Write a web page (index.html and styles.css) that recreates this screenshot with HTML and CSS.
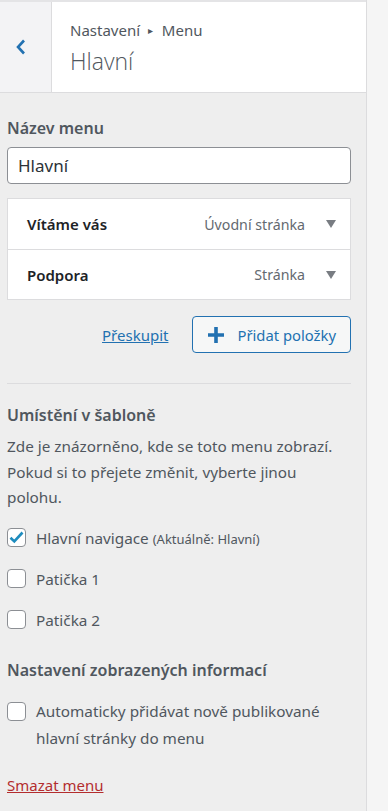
FILE: index.html
```html
<!DOCTYPE html>
<html lang="cs">
<head>
  <meta charset="UTF-8" />
  <meta name="viewport" content="width=device-width, initial-scale=1.0"/>
  <title>Menu – Hlavní</title>
  <link rel="stylesheet" href="styles.css">
</head>
<body>
  <div class="sidebar">
    <div class="panel-head">
      <button class="back" aria-label="Zpět">
        <svg width="10" height="16" viewBox="0 0 10 16"><path d="M8 1.5 L2 8 L8 14.5" fill="none" stroke="#2271b1" stroke-width="2.6"/></svg>
      </button>
      <div class="head-titles">
        <div class="crumb">Nastavení <span class="sep">&#9656;</span> Menu</div>
        <div class="title">Hlavní</div>
      </div>
    </div>

    <div class="content">
      <label class="ctl-title" for="menuName">Název menu</label>
      <input type="text" id="menuName" class="name-input" value="Hlavní" />

      <ul class="menu-items">
        <li>
          <span class="item-title">Vítáme vás</span>
          <span class="item-type">Úvodní stránka</span>
          <span class="arrow"></span>
        </li>
        <li>
          <span class="item-title">Podpora</span>
          <span class="item-type">Stránka</span>
          <span class="arrow"></span>
        </li>
      </ul>

      <div class="actions">
        <a class="reorder">Přeskupit</a>
        <button class="add-items">
          <svg width="16" height="16" viewBox="0 0 16 16"><path d="M6.2 0h3.6v6.2H16v3.6H9.8V16H6.2V9.8H0V6.2h6.2z" fill="#2271b1"/></svg>
          Přidat položky
        </button>
      </div>

      <hr class="divider" />

      <h3 class="section-title">Umístění v šabloně</h3>
      <p class="desc">Zde je znázorněno, kde se toto menu zobrazí. Pokud si to přejete změnit, vyberte jinou polohu.</p>

      <div class="locations">
        <label class="check">
          <span class="box checked">
            <svg width="15" height="13" viewBox="0 0 15 13"><path d="M1.5 6.8 L5.3 10.5 L13.5 1.5" fill="none" stroke="#1e8cbe" stroke-width="2.6"/></svg>
          </span>
          <span>Hlavní navigace <small>(Aktuálně: Hlavní)</small></span>
        </label>
        <label class="check">
          <span class="box"></span>
          <span>Patička 1</span>
        </label>
        <label class="check">
          <span class="box"></span>
          <span>Patička 2</span>
        </label>
      </div>

      <h3 class="section-title second">Nastavení zobrazených informací</h3>
      <label class="check multi">
        <span class="box"></span>
        <span>Automaticky přidávat nově publikované hlavní stránky do menu</span>
      </label>

      <a class="delete">Smazat menu</a>
    </div>
  </div>
</body>
</html>
```

FILE: styles.css
```css
* {
  margin: 0;
  padding: 0;
  box-sizing: border-box;
}

body {
  font-family: "Noto Sans", "Open Sans", sans-serif;
  background: #f5f5f5;
  color: #50575e;
  min-height: 100vh;
}

.sidebar {
  width: 367px;
  min-height: 811px;
  background: #eeeeee;
  border-right: 1px solid #dcdcde;
}

.panel-head {
  display: flex;
  height: 93px;
  border-top: 2px solid #e4e4e6;
  border-bottom: 1px solid #dcdcde;
}

.back {
  width: 52px;
  background: #f3f3f5;
  border: none;
  border-right: 1px solid #dcdcde;
  display: flex;
  align-items: center;
  justify-content: center;
  padding-right: 10px;
}

.head-titles {
  flex: 1;
  background: #fff;
  padding: 17px 0 0 18px;
}

.crumb {
  font-size: 15px;
  line-height: 22px;
  color: #50575e;
}

.crumb .sep {
  font-size: 10px;
  position: relative;
  top: -2px;
  margin: 0 5px 0 4px;
}

.title {
  font-family: "Open Sans", "Noto Sans", sans-serif;
  font-size: 23px;
  font-weight: 300;
  line-height: 32px;
  margin-top: 2px;
  color: #50575e;
}

.content {
  padding: 23px 15px 0 7px;
}

.ctl-title {
  display: block;
  font-size: 16px;
  font-weight: 600;
  line-height: 24px;
  color: #50575e;
}

.name-input {
  display: block;
  width: 100%;
  height: 37px;
  margin-top: 7px;
  padding: 0 10px;
  border: 1px solid #8c8f94;
  border-radius: 4px;
  font-family: inherit;
  font-size: 17px;
  color: #2c3338;
  background: #fff;
}

.menu-items {
  list-style: none;
  margin-top: 14px;
  background: #fff;
  border: 1px solid #dcdcde;
}

.menu-items li {
  display: flex;
  align-items: center;
  height: 50px;
  padding: 0 14px 0 19px;
}

.menu-items li + li {
  border-top: 1px solid #dcdcde;
}

.item-title {
  flex: 1;
  font-size: 15px;
  font-weight: 600;
  color: #1d2327;
}

.item-type {
  font-size: 14.2px;
  color: #646970;
}

.arrow {
  width: 0;
  height: 0;
  margin-left: 21px;
  border-left: 5px solid transparent;
  border-right: 5px solid transparent;
  border-top: 8px solid #787c82;
}

.actions {
  display: flex;
  justify-content: flex-end;
  align-items: center;
  margin-top: 16px;
}

.reorder {
  font-size: 15px;
  color: #2271b1;
  text-decoration: underline;
  margin-right: 24px;
}

.add-items {
  display: flex;
  align-items: center;
  gap: 13px;
  height: 37px;
  padding: 0 14px 0 15px;
  border: 1px solid #2271b1;
  border-radius: 4px;
  background: #f6f7f7;
  color: #2271b1;
  font-family: inherit;
  font-size: 14.8px;
}

.divider {
  border: none;
  border-top: 1px solid #dcdcde;
  margin-top: 30px;
}

.section-title {
  font-size: 16px;
  font-weight: 600;
  line-height: 24px;
  margin-top: 19px;
  color: #50575e;
}

.section-title.second {
  margin-top: 18px;
}

.desc {
  font-size: 15.3px;
  line-height: 25.7px;
  margin-top: 7px;
}

.locations {
  margin-top: 6px;
}

.check {
  display: flex;
  align-items: center;
  gap: 10px;
  font-size: 15.3px;
  color: #50575e;
  height: 41px;
}

.check small {
  font-size: 13px;
}

.box {
  flex: none;
  width: 19px;
  height: 19px;
  background: #fff;
  border: 1px solid #8c8f94;
  border-radius: 4px;
  display: flex;
  align-items: center;
  justify-content: center;
}

.check.multi {
  align-items: flex-start;
  height: auto;
  line-height: 27px;
  margin-top: 16px;
}

.check.multi .box {
  margin-top: 4px;
}

.delete {
  display: inline-block;
  margin-top: 23px;
  font-size: 15px;
  color: #b32d2e;
  text-decoration: underline;
}
```
